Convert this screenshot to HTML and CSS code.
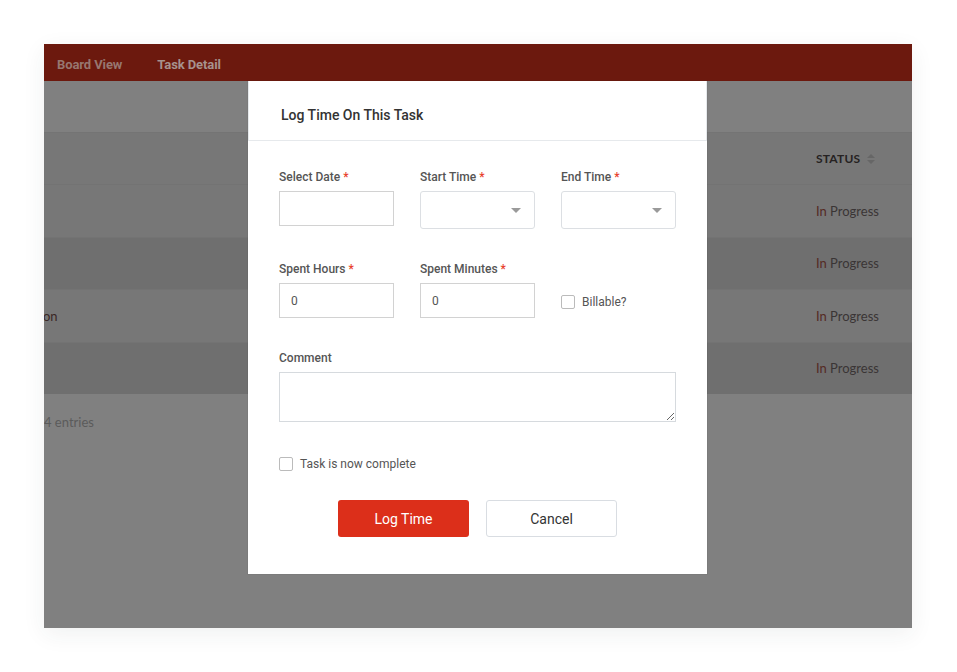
FILE: index.html
```html
<!DOCTYPE html>
<html lang="en">
<head>
    <meta charset="UTF-8">
    <title>Task Detail - Log Time</title>
    <link rel="stylesheet" href="styles.css">
</head>
<body>
    <div class="app-frame">
        <div class="top-nav">
            <a class="nav-link">Board View</a>
            <a class="nav-link current">Task Detail</a>
        </div>

        <div class="page-body">
            <div class="task-table">
                <div class="table-row table-head">
                    <div></div>
                    <div class="status-head">STATUS <span class="sort-icon"></span></div>
                </div>
                <div class="table-row">
                    <div></div>
                    <div class="status"><span class="status-in">In</span> Progress</div>
                </div>
                <div class="table-row alt">
                    <div></div>
                    <div class="status"><span class="status-in">In</span> Progress</div>
                </div>
                <div class="table-row">
                    <div class="task-name">on</div>
                    <div class="status"><span class="status-in">In</span> Progress</div>
                </div>
                <div class="table-row alt">
                    <div></div>
                    <div class="status"><span class="status-in">In</span> Progress</div>
                </div>
            </div>
            <div class="table-info">4 entries</div>
        </div>

        <!-- modal sits over the dimmed page -->
        <div class="modal">
            <div class="modal-header">
                <h3 class="modal-title">Log Time On This Task</h3>
            </div>
            <div class="modal-body">
                <div class="form-row">
                    <div class="field">
                        <label class="field-label">Select Date <span class="req">*</span></label>
                        <input class="text-input" type="text">
                    </div>
                    <div class="field">
                        <label class="field-label">Start Time <span class="req">*</span></label>
                        <div class="select-box"><span class="caret"></span></div>
                    </div>
                    <div class="field">
                        <label class="field-label">End Time <span class="req">*</span></label>
                        <div class="select-box"><span class="caret"></span></div>
                    </div>
                </div>

                <div class="form-row second">
                    <div class="field">
                        <label class="field-label">Spent Hours <span class="req">*</span></label>
                        <input class="text-input" type="text" value="0">
                    </div>
                    <div class="field">
                        <label class="field-label">Spent Minutes <span class="req">*</span></label>
                        <input class="text-input" type="text" value="0">
                    </div>
                    <div class="field check-field">
                        <label class="check"><span class="check-box"></span>Billable?</label>
                    </div>
                </div>

                <div class="comment-field">
                    <label class="field-label">Comment</label>
                    <textarea class="comment-input"></textarea>
                </div>

                <label class="check complete-check"><span class="check-box"></span>Task is now complete</label>

                <div class="modal-actions">
                    <button class="btn btn-primary">Log Time</button>
                    <button class="btn btn-default">Cancel</button>
                </div>
            </div>
        </div>
    </div>
</body>
</html>
```

FILE: styles.css
```css
* {
    margin: 0;
    padding: 0;
    box-sizing: border-box;
}

body {
    background: #fff;
    padding: 44px;
    font-family: 'Roboto', 'Liberation Sans', sans-serif;
}

.app-frame {
    width: 868px;
    height: 584px;
    background: #808080;
    position: relative;
    overflow: hidden;
    box-shadow: 0 6px 22px rgba(40, 60, 60, 0.07);
}

.top-nav {
    height: 37px;
    background: #6c190e;
    display: flex;
    align-items: center;
    gap: 35px;
    padding-left: 13px;
    padding-top: 4px;
}

.nav-link {
    font-size: 13px;
    font-weight: 700;
    color: #977670;
    letter-spacing: -0.1px;
}

.nav-link.current {
    color: #a6928d;
}

.page-body {
    padding-top: 51px;
    font-family: 'Lato', 'Liberation Sans', sans-serif;
}

.table-row {
    display: grid;
    grid-template-columns: 772px 1fr;
    align-items: center;
    height: 52.5px;
    background: #777;
    border-top: 1px solid #737373;
    font-size: 13px;
    color: #3a3535;
}

.table-row.alt {
    background: #6f6f6f;
}

.table-head {
    height: 52px;
    border-top: 1px solid #747474;
}

.status-head {
    font-size: 12px;
    font-weight: 700;
    color: #262222;
    display: flex;
    align-items: center;
    gap: 7px;
    letter-spacing: 0.2px;
}

.sort-icon {
    display: inline-block;
    width: 8px;
    height: 10px;
    position: relative;
}

.sort-icon::before,
.sort-icon::after {
    content: '';
    position: absolute;
    left: 0;
    border-left: 4px solid transparent;
    border-right: 4px solid transparent;
}

.sort-icon::before {
    top: 0;
    border-bottom: 4px solid #666;
}

.sort-icon::after {
    bottom: 0;
    border-top: 4px solid #666;
}

.status-in {
    color: #552a24;
}

.task-name {
    color: #3a2826;
    margin-left: -1px;
}

.table-info {
    margin-top: 20px;
    font-size: 13px;
    color: #5b5b5b;
}

/* modal */
.modal {
    position: absolute;
    left: 204px;
    top: 37px;
    width: 459px;
    height: 493px;
    background: #fff;
    box-shadow: 0 0 0 1px rgba(0, 0, 0, 0.04);
}

.modal-header {
    height: 60px;
    display: flex;
    align-items: center;
    padding-left: 32px;
    padding-top: 8px;
    border: 1px solid #e6e9ec;
    border-top: none;
}

.modal-title {
    font-size: 14px;
    font-weight: 500;
    color: #333;
}

.modal-body {
    padding: 29px 31px 0;
}

.form-row {
    display: grid;
    grid-template-columns: repeat(3, 115px);
    column-gap: 26px;
}

.form-row.second {
    margin-top: 33px;
}

.field-label {
    display: block;
    font-size: 12px;
    font-weight: 500;
    color: #555;
    line-height: 14px;
    margin-bottom: 7px;
}

.req {
    color: #e8412c;
}

.text-input {
    display: block;
    width: 115px;
    height: 35px;
    border: 1px solid #d2d2d2;
    padding: 0 11px;
    font-family: inherit;
    font-size: 12px;
    color: #555;
    outline: none;
}

.select-box {
    width: 115px;
    height: 38px;
    border: 1px solid #dcdfe3;
    border-radius: 3px;
    display: flex;
    align-items: center;
    justify-content: flex-end;
    padding-right: 13px;
}

.caret {
    width: 0;
    height: 0;
    border-left: 5px solid transparent;
    border-right: 5px solid transparent;
    border-top: 5px solid #9a9a9a;
}

.check-field {
    display: flex;
    align-items: flex-end;
    padding-bottom: 9px;
}

.check {
    display: flex;
    align-items: center;
    gap: 7px;
    font-size: 12px;
    color: #555;
}

.check-box {
    width: 14px;
    height: 14px;
    border: 1px solid #bbb;
    border-radius: 2px;
    background: #fff;
}

.comment-field {
    margin-top: 33px;
}

.comment-input {
    display: block;
    width: 397px;
    height: 50px;
    border: 1px solid #d6dade;
    resize: vertical;
    outline: none;
}

.complete-check {
    margin-top: 35px;
}

.modal-actions {
    display: flex;
    justify-content: center;
    gap: 17px;
    margin-top: 29px;
}

.btn {
    width: 131px;
    height: 37px;
    border-radius: 3px;
    font-family: inherit;
    font-size: 14px;
    cursor: pointer;
}

.btn-primary {
    background: #dc2f1a;
    color: #fff;
    border: none;
}

.btn-default {
    background: #fff;
    color: #333;
    border: 1px solid #d9dde2;
}
```
